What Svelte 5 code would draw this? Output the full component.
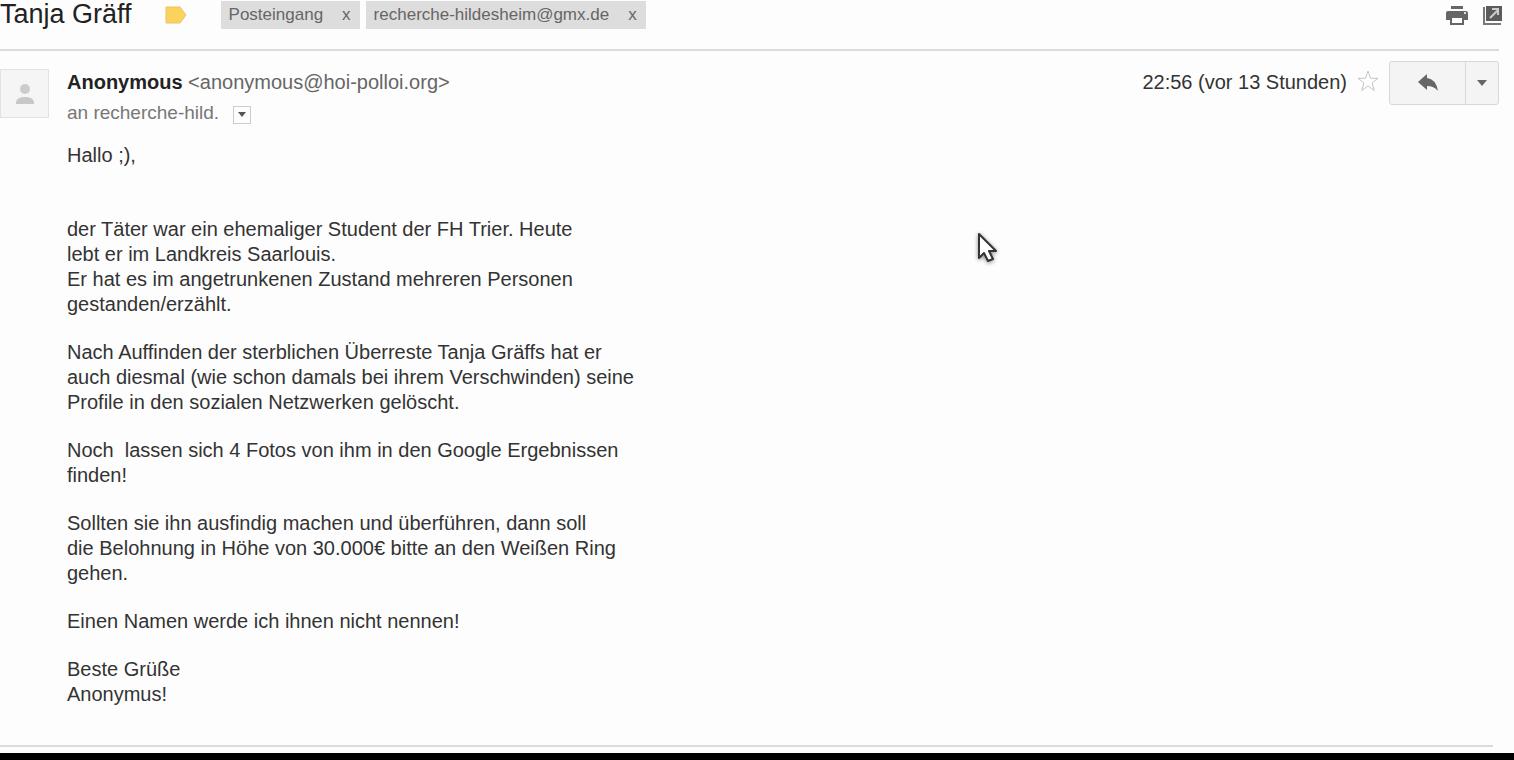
<script lang="ts">
  const subject = "Tanja Gräff";
  const sender = { name: "Anonymous", email: "anonymous@hoi-polloi.org" };

  let labels = $state(["Posteingang", "recherche-hildesheim@gmx.de"]);
  let starred = $state(false);

  const paragraphs = [
    "der Täter war ein ehemaliger Student der FH Trier. Heute\nlebt er im Landkreis Saarlouis.\nEr hat es im angetrunkenen Zustand mehreren Personen\ngestanden/erzählt.",
    "Nach Auffinden der sterblichen Überreste Tanja Gräffs hat er\nauch diesmal (wie schon damals bei ihrem Verschwinden) seine\nProfile in den sozialen Netzwerken gelöscht.",
    "Noch  lassen sich 4 Fotos von ihm in den Google Ergebnissen\nfinden!",
    "Sollten sie ihn ausfindig machen und überführen, dann soll\ndie Belohnung in Höhe von 30.000€ bitte an den Weißen Ring\ngehen.",
    "Einen Namen werde ich ihnen nicht nennen!",
    "Beste Grüße\nAnonymus!"
  ];

  function removeLabel(label: string) {
    labels = labels.filter((l) => l !== label);
  }
</script>

<main>
  <header class="subject-bar">
    <h1>{subject}</h1>
    <button class="marker" aria-label="Wichtig">
      <svg width="22" height="18" viewBox="0 0 22 18">
        <path d="M1 1h14l6 8-6 8H1z" fill="#fbd35c" stroke="#ecc070" />
      </svg>
    </button>
    <ul class="labels">
      {#each labels as label (label)}
        <li>
          <a href="#label">{label}</a>
          <button aria-label="{label} entfernen" onclick={() => removeLabel(label)}>x</button>
        </li>
      {/each}
    </ul>
    <div class="tools">
      <button aria-label="Drucken">
        <svg width="22" height="20" viewBox="0 0 22 20">
          <path d="M5 1h12v3H5z" fill="#666" />
          <path d="M2 6h18q2 0 2 2v7h-4v-4H4v4H0V8q0-2 2-2z" fill="#666" />
          <path d="M5 12h12v7H5z" fill="#fff" stroke="#666" stroke-width="2" />
          <path d="M18 7h2v2h-2z" fill="#ddd" />
        </svg>
      </button>
      <button aria-label="In neuem Fenster">
        <svg width="20" height="20" viewBox="0 0 20 20">
          <path d="M1 2v17h17" fill="none" stroke="#777" stroke-width="2" />
          <path d="M3 1h16v15H3z" fill="#5c5c5c" />
          <path d="M7 13l8-8M9 4h6v6" fill="none" stroke="#ccc" stroke-width="2" />
        </svg>
      </button>
    </div>
  </header>

  <article>
    <div class="avatar">
      <svg width="20" height="22" viewBox="0 0 20 22">
        <circle cx="10" cy="6" r="5" fill="#ccc" />
        <path d="M1 21v-2q1-5 9-5t9 5v2z" fill="#c8c8c8" />
      </svg>
    </div>

    <div class="message">
      <div class="meta">
        <div class="from">
          <p class="sender"><b>{sender.name}</b> &lt;{sender.email}&gt;</p>
          <p class="to">
            an recherche-hild.
            <button class="details" aria-label="Details anzeigen">
              <svg width="8" height="5" viewBox="0 0 8 5"><path d="M0 0h8L4 5z" fill="#555" /></svg>
            </button>
          </p>
        </div>
        <time>22:56 (vor 13 Stunden)</time>
        <button class="star" aria-label="Markieren" aria-pressed={starred} onclick={() => (starred = !starred)}>
          <svg width="22" height="22" viewBox="0 0 22 22">
            <path
              d="M11 1l2.500 7.300h7.500l-6 4.600 2.300 7.600-6.300-4.600-6.300 4.600L7 12.900 1 8.300h7.500z"
              fill={starred ? "#fbd35c" : "#fff"}
              stroke="#c4c4c4"
            />
          </svg>
        </button>
        <div class="reply">
          <button aria-label="Antworten">
            <svg width="20" height="18" viewBox="0 0 20 18">
              <path d="M0 8l9-8v4q9 1 11 13-4-5-11-5v4z" fill="#666" />
            </svg>
          </button>
          <button class="more" aria-label="Mehr">
            <svg width="10" height="6" viewBox="0 0 10 6"><path d="M0 0h10L5 6z" fill="#666" /></svg>
          </button>
        </div>
      </div>

      <div class="body">
        <p class="greeting">Hallo ;),</p>
        {#each paragraphs as text}
          <p>{text}</p>
        {/each}
      </div>
    </div>
  </article>

  <footer></footer>

  <svg class="cursor" width="24" height="36" viewBox="0 0 24 36">
    <path d="M3 3v24l5-5 4 8 5-2-4-8h7z" fill="#fff" stroke="#333" stroke-width="2" stroke-linejoin="round" />
  </svg>
</main>

<style>
  :global(body) {
    margin: 0;
    background: #fdfdfd;
  }
  main {
    position: relative;
    font-family: "Liberation Sans", Arial, sans-serif;
    font-size: 20px;
    line-height: 25px;
    color: #333;
  }
  h1, p, ul {
    margin: 0;
    padding: 0;
  }
  button {
    padding: 0;
    border: 0;
    background: none;
    font: inherit;
    color: inherit;
    cursor: pointer;
  }
  svg {
    display: block;
  }
  .subject-bar {
    display: flex;
    align-items: flex-start;
    padding-bottom: 20px;
    margin-right: 15px;
    border-bottom: 2px solid #dcdcdc;
  }
  h1 {
    font-size: 27px;
    font-weight: 400;
    line-height: 28px;
    color: #222;
  }
  .marker {
    margin: 6px 34px 0 33px;
  }
  .labels {
    display: flex;
    gap: 6px;
    margin-top: 1px;
    list-style: none;
    font-size: 17px;
    line-height: 28px;
    color: #666;
  }
  .labels li {
    display: flex;
    background: #ddd;
  }
  .labels a {
    padding: 0 10px 0 8px;
    color: inherit;
    text-decoration: none;
  }
  .labels button {
    padding: 0 9px;
  }
  .tools {
    display: flex;
    gap: 15px;
    margin: 5px -4px 0 auto;
  }
  article {
    display: flex;
    gap: 18px;
    margin-right: 15px;
    padding-top: 10px;
  }
  .avatar {
    display: flex;
    align-items: center;
    justify-content: center;
    width: 49px;
    height: 49px;
    margin-top: 8px;
    flex: none;
    box-sizing: border-box;
    border: 1px solid #e2e2e2;
    background: #f5f5f5;
  }
  .message {
    flex: 1;
  }
  .meta {
    display: flex;
    align-items: flex-start;
  }
  .from {
    flex: 1;
    padding-top: 9px;
    color: #666;
  }
  .sender b {
    color: #222;
  }
  .to {
    display: flex;
    align-items: center;
    gap: 14px;
    margin-top: 5px;
    font-size: 19px;
    color: #777;
  }
  .details {
    display: flex;
    align-items: center;
    justify-content: center;
    width: 18px;
    height: 18px;
    margin-top: 4px;
    border: 1px solid #ccc;
  }
  time {
    padding-top: 9px;
  }
  .star {
    margin: 9px 10px 0;
  }
  .reply {
    display: flex;
    height: 44px;
    box-sizing: border-box;
    border: 1px solid #d8d8d8;
    border-radius: 3px;
    background: #f4f4f4;
  }
  .reply button {
    display: flex;
    align-items: center;
    justify-content: center;
    width: 75px;
  }
  .reply .more {
    width: 33px;
    border-left: 1px solid #d8d8d8;
  }
  .body {
    margin-top: 18px;
  }
  .body p {
    margin-bottom: 23px;
    white-space: pre-wrap;
  }
  .body p:last-child {
    margin-bottom: 0;
  }
  .body .greeting {
    margin-bottom: 49px;
  }
  footer {
    margin-top: 38px;
    padding-top: 8px;
    border-bottom: 7px solid #000;
    background: linear-gradient(#dcdcdc, #dcdcdc) no-repeat 0 0 / calc(100% - 21px) 2px;
  }
  .cursor {
    position: absolute;
    left: 976px;
    top: 231px;
    filter: drop-shadow(0 1px 2px #888);
  }
</style>
